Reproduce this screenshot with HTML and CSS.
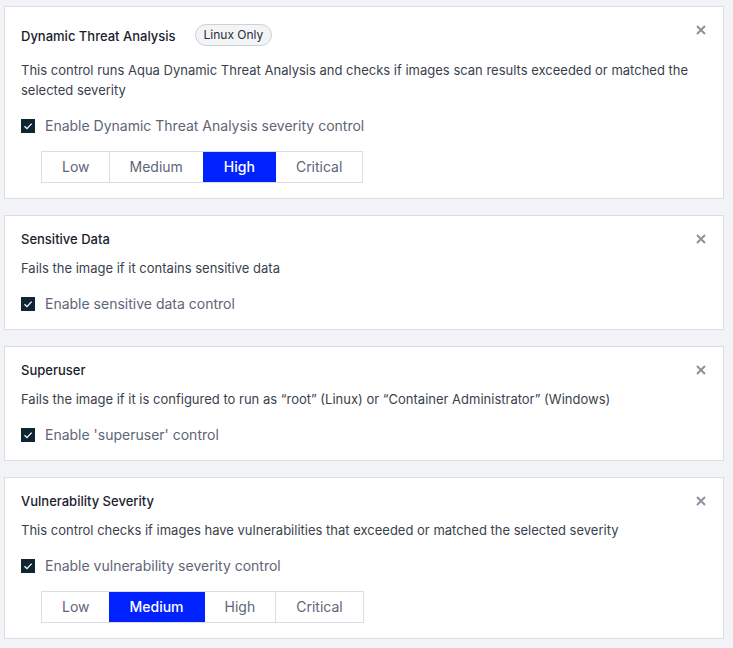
FILE: index.html
```html
<!DOCTYPE html>
<html>
<head>
<meta charset="utf-8">
<link rel="stylesheet" href="styles.css">
</head>
<body>
<div class="list">
  <section class="card">
    <button class="close" aria-label="Close"><svg viewBox="0 0 10 10" width="10" height="10"><path d="M1 1L9 9M9 1L1 9" stroke="currentColor" stroke-width="2" stroke-linecap="butt"/></svg></button>
    <div class="head"><span class="title">Dynamic Threat Analysis</span><span class="badge">Linux Only</span></div>
    <p class="desc">This control runs Aqua Dynamic Threat Analysis and checks if images scan results exceeded or matched the selected severity</p>
    <label class="check"><span class="box"><svg viewBox="0 0 14 14" width="14" height="14"><path d="M3.5 7.2L6 9.6L10.6 4.6" fill="none" stroke="#fff" stroke-width="1.3"/></svg></span>Enable Dynamic Threat Analysis severity control</label>
    <div class="seg"><span class="first">Low</span><span>Medium</span><span class="on">High</span><span>Critical</span></div>
  </section>
  <section class="card">
    <button class="close" aria-label="Close"><svg viewBox="0 0 10 10" width="10" height="10"><path d="M1 1L9 9M9 1L1 9" stroke="currentColor" stroke-width="2"/></svg></button>
    <div class="head"><span class="title">Sensitive Data</span></div>
    <p class="desc">Fails the image if it contains sensitive data</p>
    <label class="check"><span class="box"><svg viewBox="0 0 14 14" width="14" height="14"><path d="M3.5 7.2L6 9.6L10.6 4.6" fill="none" stroke="#fff" stroke-width="1.3"/></svg></span>Enable sensitive data control</label>
  </section>
  <section class="card">
    <button class="close" aria-label="Close"><svg viewBox="0 0 10 10" width="10" height="10"><path d="M1 1L9 9M9 1L1 9" stroke="currentColor" stroke-width="2"/></svg></button>
    <div class="head"><span class="title">Superuser</span></div>
    <p class="desc">Fails the image if it is configured to run as “root” (Linux) or “Container Administrator” (Windows)</p>
    <label class="check"><span class="box"><svg viewBox="0 0 14 14" width="14" height="14"><path d="M3.5 7.2L6 9.6L10.6 4.6" fill="none" stroke="#fff" stroke-width="1.3"/></svg></span>Enable 'superuser' control</label>
  </section>
  <section class="card">
    <button class="close" aria-label="Close"><svg viewBox="0 0 10 10" width="10" height="10"><path d="M1 1L9 9M9 1L1 9" stroke="currentColor" stroke-width="2"/></svg></button>
    <div class="head"><span class="title">Vulnerability Severity</span></div>
    <p class="desc">This control checks if images have vulnerabilities that exceeded or matched the selected severity</p>
    <label class="check"><span class="box"><svg viewBox="0 0 14 14" width="14" height="14"><path d="M3.5 7.2L6 9.6L10.6 4.6" fill="none" stroke="#fff" stroke-width="1.3"/></svg></span>Enable vulnerability severity control</label>
    <div class="seg"><span class="first">Low</span><span class="on">Medium</span><span>High</span><span>Critical</span></div>
  </section>
</div>
</body>
</html>
```

FILE: styles.css
```css
html, body {
  margin: 0;
  padding: 0;
  background: #f2f3f6;
}
body {
  font-family: Inter, "Noto Sans", sans-serif;
  padding: 6px 9px 0 4px;
}
.list {
  display: flex;
  flex-direction: column;
  gap: 16px;
}
.card {
  position: relative;
  background: #fff;
  border: 1px solid #dcdde2;
  padding: 13px 16px 15px;
  display: flex;
  flex-direction: column;
  align-items: flex-start;
}
.close {
  position: absolute;
  top: 18px;
  right: 17px;
  border: 0;
  background: none;
  padding: 0;
  width: 10px;
  height: 10px;
  color: #8d929d;
  display: block;
}
.close svg { display: block; }
.head {
  display: flex;
  align-items: center;
  min-height: 20px;
  gap: 19px;
}
.title {
  font-size: 13px;
  line-height: 20px;
  font-weight: 500;
  color: #1b1d2c;
}
.badge {
  height: 22px;
  box-sizing: border-box;
  margin: 4px 0 5px;
  padding: 0 8px;
  border: 1px solid #cfd1d8;
  border-radius: 11px;
  background: #f3f4f6;
  font-size: 12px;
  line-height: 20px;
  color: #2a2d3a;
}
.desc {
  margin: 9px 0 0;
  font-size: 13px;
  line-height: 20px;
  color: #3a3f4e;
}
.check {
  margin-top: 16px;
  display: flex;
  align-items: center;
  gap: 10px;
  font-size: 14px;
  line-height: 20px;
  color: #5e6577;
}
.box {
  width: 14px;
  height: 14px;
  background: #0e2631;
  display: block;
}
.box svg { display: block; }
.seg {
  margin: 15px 0 0 20px;
  display: flex;
  border: 1px solid #dcdde2;
  height: 32px;
  box-sizing: border-box;
}
.seg span {
  padding: 0 20px;
  font-size: 14px;
  line-height: 30px;
  color: #5e6577;
  border-left: 1px solid #dcdde2;
}
.seg span.first {
  border-left: 0;
  padding: 0 19px 0 20px;
}
.seg span.on {
  background: #0022ff;
  color: #fff;
  font-weight: 500;
  border-left-color: #0022ff;
}
.seg span.on + span { border-left-color: #0022ff; }
```
